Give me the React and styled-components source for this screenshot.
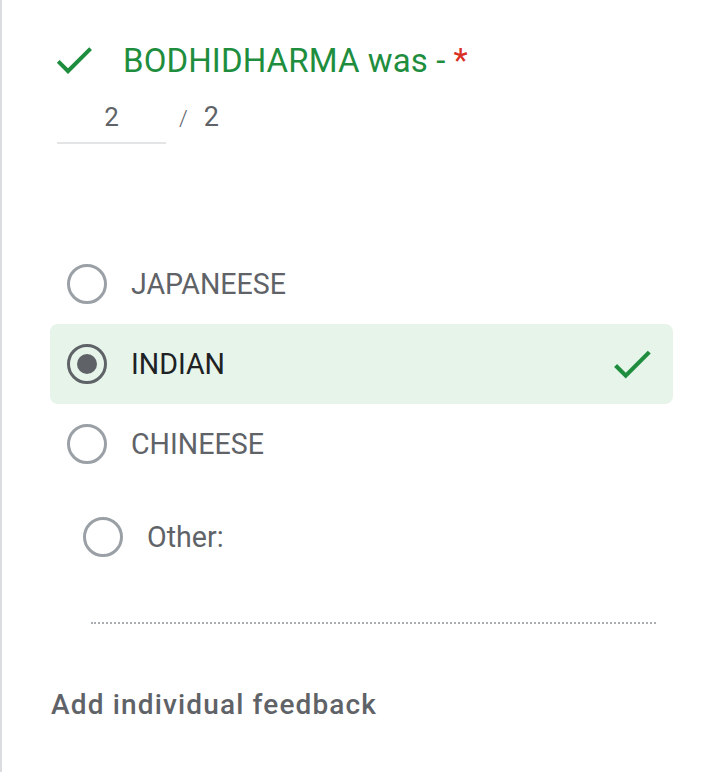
import React from 'react';
import styled, { createGlobalStyle } from 'styled-components';

const GlobalStyle = createGlobalStyle`
  html, body {
    margin: 0;
    padding: 0;
    background: #fff;
  }
  body {
    font-family: Roboto, "Liberation Sans", Arial, sans-serif;
  }
`;

const Card = styled.div`
  width: 720px;
  height: 772px;
  box-sizing: border-box;
  border-left: 2px solid #dadce0;
  background: #fff;
  padding: 40px 47px 0 48px;
  overflow: hidden;
`;

const TitleRow = styled.div`
  display: flex;
  align-items: center;
  height: 40px;
`;

const TitleText = styled.div`
  margin-left: 25px;
  font-size: 33px;
  color: #1e8e3e;
  letter-spacing: 0.1px;
`;

const Required = styled.span`
  color: #d93025;
  margin-left: 8px;
`;

const ScoreRow = styled.div`
  display: flex;
  align-items: flex-start;
  margin-top: 22px;
  padding-left: 7px;
  height: 44px;
`;

const ScoreInput = styled.div`
  width: 109px;
  height: 42px;
  box-sizing: border-box;
  border-bottom: 2px solid #e3e4e6;
  text-align: center;
  font-size: 26px;
  color: #5f6368;
  line-height: 30px;
`;

const ScoreTotal = styled.div`
  margin-left: 13px;
  font-size: 27px;
  line-height: 30px;
  color: #5f6368;
  span {
    font-size: 22px;
    font-weight: 300;
    margin-right: 16px;
  }
`;

const Options = styled.div`
  margin-top: 98px;
  display: flex;
  flex-direction: column;
`;

const Option = styled.div`
  display: flex;
  align-items: center;
  height: 80px;
  box-sizing: border-box;
  padding: 0 16px 0 ${p => (p.$other ? 33 : 17)}px;
  border-radius: 8px;
  background: ${p => (p.$correct ? '#e6f4ea' : 'transparent')};
`;

const Radio = styled.div`
  width: 40px;
  height: 40px;
  box-sizing: border-box;
  border-radius: 50%;
  border: 3px solid ${p => (p.$checked ? '#5f6368' : '#9aa0a6')};
  display: flex;
  align-items: center;
  justify-content: center;
  flex-shrink: 0;
  &::after {
    content: '';
    display: ${p => (p.$checked ? 'block' : 'none')};
    width: 20px;
    height: 20px;
    border-radius: 50%;
    background: #5f6368;
  }
`;

const Label = styled.div`
  margin-left: 24px;
  font-size: 28.6px;
  color: ${p => (p.$checked ? '#202124' : '#5f6368')};
  flex: 1;
`;

const OtherRow = styled(Option)`
  height: 106px;
`;

const OtherLine = styled.div`
  margin: 32px 17px 0 41px;
  border-bottom: 2px dotted #aaaeb2;
`;

const Feedback = styled.div`
  margin-top: 64px;
  margin-left: 1px;
  font-size: 28px;
  font-weight: 500;
  color: #5f6368;
  letter-spacing: 1.15px;
`;

const Check = ({ size = 36 }) => (
  <svg width={size} height={size} viewBox="0 0 24 24">
    <path d="M9 16.17 4.83 12l-1.42 1.41L9 19 21 7l-1.41-1.41z" fill="#1e8e3e" />
  </svg>
);

const options = [
  { label: 'JAPANEESE' },
  { label: 'INDIAN', checked: true, correct: true },
  { label: 'CHINEESE' },
];

export default function App() {
  return (
    <>
      <GlobalStyle />
      <Card>
        <TitleRow>
          <Check size={48} />
          <TitleText>
            BODHIDHARMA was -<Required>*</Required>
          </TitleText>
        </TitleRow>
        <ScoreRow>
          <ScoreInput>2</ScoreInput>
          <ScoreTotal>
            <span>/</span>2
          </ScoreTotal>
        </ScoreRow>
        <Options>
          {options.map(o => (
            <Option key={o.label} $correct={o.correct}>
              <Radio $checked={o.checked} />
              <Label $checked={o.checked}>{o.label}</Label>
              {o.correct && <Check size={50} />}
            </Option>
          ))}
          <OtherRow $other>
            <Radio />
            <Label>Other:</Label>
          </OtherRow>
        </Options>
        <OtherLine />
        <Feedback>Add individual feedback</Feedback>
      </Card>
    </>
  );
}
